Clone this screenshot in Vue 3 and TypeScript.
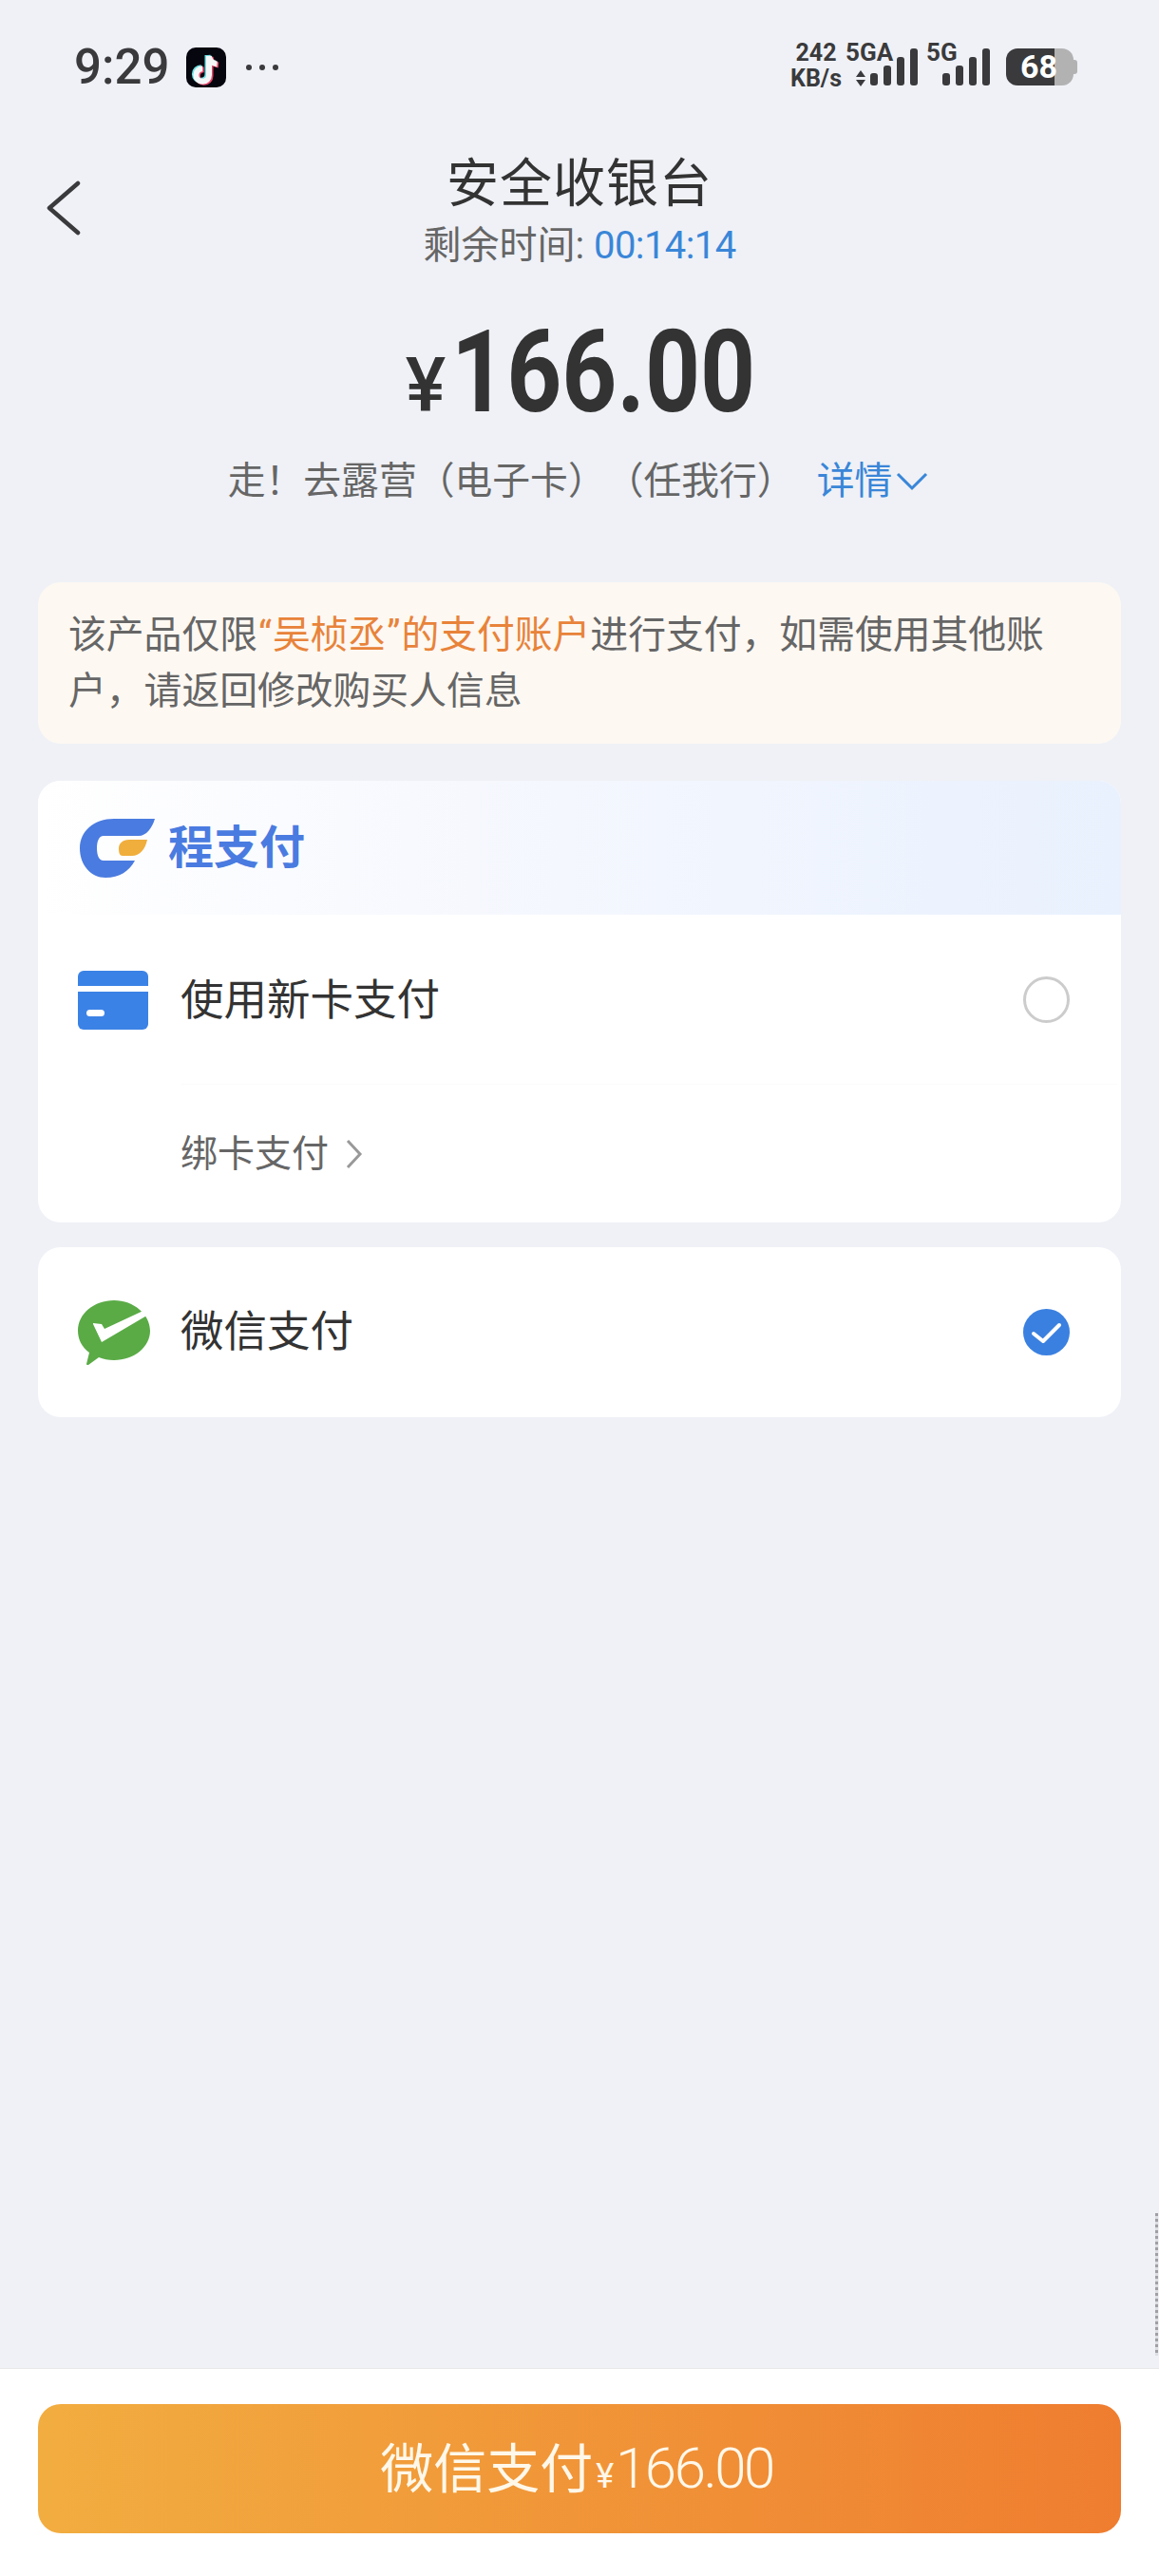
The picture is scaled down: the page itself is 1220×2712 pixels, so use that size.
<template>
  <div class="page">
    <div class="status">
      <div class="status-left">
        <span class="time">9:29</span>
        <svg class="tiktok" width="42" height="42" viewBox="0 0 42 42">
          <rect width="42" height="42" rx="10" fill="#06060f" />
          <g fill="none" stroke-width="6" stroke-linecap="butt">
            <path d="M22.500 8v20a6.800 6.800 0 1 1-6.800-6.800M22.500 8c.5 4.500 3.500 8 8.500 8.500" stroke="#6fe0e4" />
            <path d="M25.500 10v20a6.800 6.800 0 1 1-6.800-6.800M25.500 10c.5 4.500 3.500 8 8.500 8.500" stroke="#e8466a" />
            <path d="M24 9v20a6.800 6.800 0 1 1-6.800-6.800M24 9c.5 4.500 3.500 8 8.500 8.500" stroke="#f4f7f7" />
          </g>
        </svg>
        <span class="dots"><i></i><i></i><i></i></span>
      </div>
      <div class="status-right">
        <div class="speed"><span>242</span><span>KB/s</span></div>
        <div class="sig sig-a">
          <span class="sig-label">5GA</span>
          <svg width="76" height="44" viewBox="0 0 76 44">
            <path d="M16 28l5 7H11zM16 45l5-7H11z" fill="#3a3a3c" />
            <rect v-for="(top, i) in barTops" :key="i" :x="26 + i * 14" :y="top" width="8" :height="44 - top" rx="3" fill="#3a3a3c" />
          </svg>
        </div>
        <div class="sig sig-b">
          <span class="sig-label">5G</span>
          <svg width="67" height="44" viewBox="0 0 67 44">
            <rect v-for="(top, i) in barTops" :key="i" :x="17 + i * 14" :y="top" width="8" :height="44 - top" rx="3" fill="#3a3a3c" />
          </svg>
        </div>
        <div class="battery">68</div>
      </div>
    </div>

    <div class="nav">
      <svg class="back" width="38" height="58" viewBox="0 0 38 58">
        <path d="M34 3L4 29l30 26" fill="none" stroke="#3a3a3c" stroke-width="4.500" stroke-linecap="round" stroke-linejoin="round" />
      </svg>
      <div class="nav-center">
        <div class="title">安全收银台</div>
        <div class="remain">剩余时间: <span class="blue timer">00:14:14</span></div>
      </div>
    </div>

    <div class="amount">
      <span class="yen">¥</span><span class="num">166.00</span>
    </div>

    <div class="product">
      <span class="product-name">走！去露营（电子卡）（任我行）</span>
      <span class="blue detail">详情</span>
      <svg class="detail-arrow" width="34" height="20" viewBox="0 0 34 20">
        <path d="M2 2l15 15L32 2" fill="none" stroke="#3a86d8" stroke-width="3" />
      </svg>
    </div>

    <div class="notice">
      <div>该产品仅限<span class="orange"><span class="quote">“</span>吴桢丞<span class="quote">”</span>的支付账户</span>进行支付，如需使用其他账</div>
      <div>户，请返回修改购买人信息</div>
    </div>

    <div class="card">
      <div class="brand">
        <svg width="80" height="64" viewBox="0 0 80 64">
          <path d="M79 1H36C15 1 0 14 0 32c0 18 12 31 27 31 15 0 25-7 31-18H25c-5 0-7-6-7-13 0-7 2-13 7-13h37C70 19 76 11 79 1z" fill="#4a7be0" />
          <path d="M71 23H52c-7 0-11 4-11 9 0 5 1 8 4 8h10c8 0 14-7 16-17z" fill="#f0ae3c" />
        </svg>
        <span class="brand-name">程支付</span>
      </div>
      <div class="row">
        <svg class="row-icon" width="74" height="62" viewBox="0 0 74 62">
          <rect width="74" height="62" rx="6" fill="#3b82e6" />
          <rect y="16" width="74" height="6" fill="#fff" />
          <rect x="9" y="41" width="19" height="7" rx="3.500" fill="#fff" />
        </svg>
        <span class="row-text">使用新卡支付</span>
        <span class="radio"></span>
      </div>
      <div class="bind">
        <span>绑卡支付</span>
        <svg width="18" height="32" viewBox="0 0 18 32">
          <path d="M2 2l13 14L2 30" fill="none" stroke="#999" stroke-width="3" />
        </svg>
      </div>
    </div>

    <div class="card card-second">
      <div class="row row-last">
        <svg class="row-icon" width="76" height="68" viewBox="0 0 76 68">
          <path d="M38 0C17 0 0 14 0 32c0 9 4 17 12 23l-1 4-2 8c0 1 1 1 2 1l11-8c5 2 10 3 16 3 21 0 38-14 38-31S59 0 38 0z" fill="#5aab46" />
          <path d="M16 25l9 19L76 14l-3-5-45 21-3-5-9-1z" fill="#fff" />
        </svg>
        <span class="row-text">微信支付</span>
        <svg class="check" width="49" height="49" viewBox="0 0 49 49">
          <circle cx="24.500" cy="24.500" r="24.500" fill="#3a80e0" />
          <path d="M11 26l10 8 17-17" fill="none" stroke="#fff" stroke-width="4" stroke-linecap="round" stroke-linejoin="round" />
        </svg>
      </div>
    </div>

    <div class="scroll-mark"></div>

    <div class="footer">
      <div class="pay-btn">
        <span>微信支付</span><span class="pay-yen">¥</span><span class="pay-num">166.00</span>
      </div>
    </div>
  </div>
</template>

<script setup lang="ts">
const barTops: number[] = [31, 23, 14, 5];
</script>

<style scoped>
.page {
  position: relative;
  width: 1220px;
  height: 2712px;
  display: flex;
  flex-direction: column;
  overflow: hidden;
  background: #eff1f6;
  color: #333;
  font-family: Roboto, "Noto Sans CJK SC", sans-serif;
}

.status {
  height: 163px;
  flex: none;
  display: flex;
  justify-content: space-between;
  align-items: flex-start;
  padding: 46px 90px 0 78px;
  box-sizing: border-box;
}
.status-left {
  display: flex;
  align-items: center;
  height: 50px;
}
.time {
  font-size: 51px;
  line-height: 50px;
  font-weight: 500;
  color: #3a3a3c;
  width: 118px;
}
.dots {
  display: flex;
  gap: 8px;
  margin-left: 21px;
}
.dots i {
  width: 6px;
  height: 6px;
  border-radius: 50%;
  background: #3a3a3c;
}
.status-right {
  display: flex;
  align-items: flex-start;
}
.speed {
  display: flex;
  flex-direction: column;
  align-items: center;
  width: 52px;
  margin-right: 5px;
  font-size: 25px;
  font-weight: 700;
  line-height: 27px;
  color: #3a3a3c;
  margin-top: -4px;
}
.sig {
  position: relative;
  height: 44px;
  font-size: 26px;
  font-weight: 700;
  color: #3a3a3c;
}
.sig svg {
  display: block;
  overflow: visible;
}
.sig-label {
  position: absolute;
  left: 0;
  top: -4px;
  line-height: 27px;
}
.sig-a {
  width: 76px;
  margin-right: 9px;
}
.sig-b {
  width: 67px;
  margin-right: 17px;
}
.battery {
  position: relative;
  width: 71px;
  height: 39px;
  margin-top: 5px;
  border-radius: 12px;
  background: linear-gradient(90deg, #3a3a3c 72%, #b2b2b2 72%);
  color: #fff;
  font-size: 34px;
  font-weight: 700;
  line-height: 39px;
  padding-left: 15px;
  box-sizing: border-box;
}
.battery::after {
  content: "";
  position: absolute;
  right: -4px;
  top: 12px;
  width: 4px;
  height: 15px;
  border-radius: 0 3px 3px 0;
  background: #b2b2b2;
}

.nav {
  position: relative;
  flex: none;
  display: flex;
  justify-content: center;
}
.back {
  position: absolute;
  left: 48px;
  top: 27px;
}
.nav-center {
  text-align: center;
}
.title {
  font-size: 55px;
  line-height: 60px;
  color: #333;
  letter-spacing: 1px;
}
.remain {
  margin-top: 14px;
  font-size: 40px;
  line-height: 44px;
  color: #666;
}
.timer {
  letter-spacing: -0.6px;
}
.blue {
  color: #3a86d8;
}

.amount {
  flex: none;
  margin-top: 51px;
  height: 120px;
  display: flex;
  justify-content: center;
  align-items: baseline;
  line-height: 120px;
  font-weight: 700;
  color: #333;
}
.yen {
  font-size: 80px;
  margin-right: 6px;
  font-weight: 500;
}
.num {
  display: inline-block;
  width: 318px;
  font-size: 120px;
  transform: scaleX(0.845);
  transform-origin: left center;
  white-space: nowrap;
  font-weight: 700;
}

.product {
  flex: none;
  margin-top: 30px;
  display: flex;
  justify-content: center;
  align-items: center;
  height: 50px;
  font-size: 39.800px;
  line-height: 50px;
  color: #666;
}
.product-name {
  text-spacing-trim: space-all;
}
.detail {
  margin-left: 23px;
  margin-right: 4px;
}
.detail-arrow {
  margin-right: 3px;
}

.notice {
  flex: none;
  margin: 81px 40px 0;
  padding: 26px 32px;
  border-radius: 24px;
  background: #fdf8f2;
  font-size: 39.800px;
  line-height: 59px;
  color: #666;
  white-space: nowrap;
}
.orange {
  color: #e8833a;
}
.quote {
  display: inline-block;
  width: 16px;
  text-align: center;
}

.card {
  flex: none;
  margin: 39px 40px 0;
  border-radius: 24px;
  background: #fff;
  overflow: hidden;
}
.card-second {
  margin-top: 26px;
}
.brand {
  height: 141px;
  display: flex;
  align-items: center;
  gap: 13px;
  padding-left: 44px;
  background: linear-gradient(90deg, #fff 0%, #f6f8fe 40%, #e9f1fe 100%);
}
.brand-name {
  font-size: 48px;
  font-weight: 700;
  color: #4a7be0;
  padding-bottom: 10px;
}
.row {
  height: 179px;
  display: flex;
  align-items: center;
  padding: 0 54px 0 42px;
  position: relative;
}
.row::after {
  content: "";
  position: absolute;
  left: 150px;
  right: 4px;
  bottom: 0;
  height: 1px;
  background: #fbfbfb;
}
.row-last::after {
  display: none;
}
.row-icon {
  flex: none;
}
.row-text {
  margin-left: 34px;
  font-size: 45.500px;
  color: #333;
  flex: 1;
  padding-bottom: 7px;
}
.row-last .row-text {
  margin-left: 32px;
  padding-bottom: 9px;
}
.radio {
  width: 49px;
  height: 49px;
  box-sizing: border-box;
  border: 3px solid #ccc;
  border-radius: 50%;
}
.bind {
  height: 145px;
  display: flex;
  align-items: center;
  gap: 18px;
  padding-left: 150px;
  font-size: 39px;
  color: #666;
}
.bind span {
  padding-bottom: 8px;
}

.scroll-mark {
  position: absolute;
  right: 1px;
  top: 2330px;
  width: 3px;
  height: 150px;
  background: repeating-linear-gradient(180deg, #a0a0a4 0 3px, #dcdde2 3px 6px);
}

.footer {
  margin-top: auto;
  flex: none;
  height: 219px;
  box-sizing: border-box;
  padding: 37px 40px 0;
  background: #fff;
  border-top: 1px solid #e8e8e8;
}
.pay-btn {
  height: 136px;
  box-sizing: border-box;
  padding-right: 6px;
  border-radius: 24px;
  background: linear-gradient(90deg, #f2ad40, #ef7d30);
  display: flex;
  justify-content: center;
  align-items: baseline;
  line-height: 136px;
  color: #fff8ea;
  font-size: 56px;
}
.pay-yen {
  font-size: 36px;
  margin: 0 2px 0 3px;
}
.pay-num {
  font-weight: 300;
  font-size: 60px;
  letter-spacing: -2.500px;
}
</style>
